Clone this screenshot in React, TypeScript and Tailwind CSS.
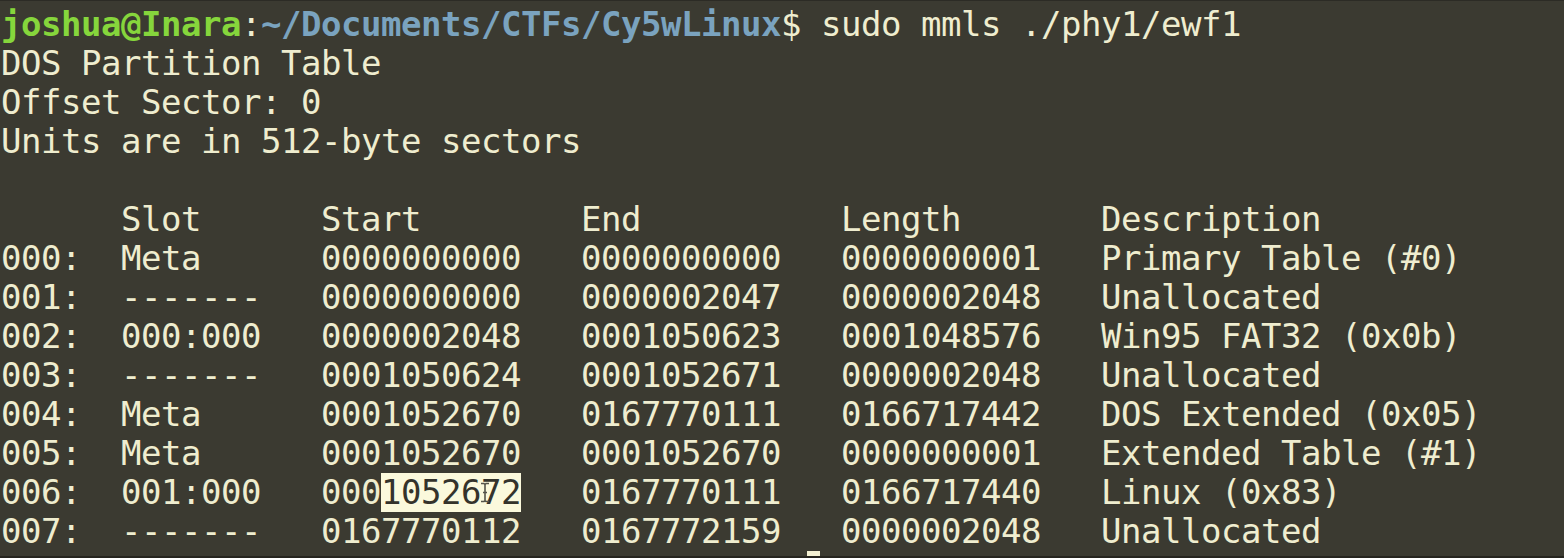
import React from 'react';

// mmls output, columns padded the way the tool prints them
const rows: [string, string, string, string, string, string][] = [
  ['000:', 'Meta', '0000000000', '0000000000', '0000000001', 'Primary Table (#0)'],
  ['001:', '-------', '0000000000', '0000002047', '0000002048', 'Unallocated'],
  ['002:', '000:000', '0000002048', '0001050623', '0001048576', 'Win95 FAT32 (0x0b)'],
  ['003:', '-------', '0001050624', '0001052671', '0000002048', 'Unallocated'],
  ['004:', 'Meta', '0001052670', '0167770111', '0166717442', 'DOS Extended (0x05)'],
  ['005:', 'Meta', '0001052670', '0001052670', '0000000001', 'Extended Table (#1)'],
  ['006:', '001:000', '0001052672', '0167770111', '0166717440', 'Linux (0x83)'],
  ['007:', '-------', '0167770112', '0167772159', '0000002048', 'Unallocated'],
];

const pad = (s: string, n: number) => s + ' '.repeat(Math.max(0, n - s.length));

function Line({ children }: { children?: React.ReactNode }) {
  return <div className="h-[39px] leading-[39px] whitespace-pre">{children}</div>;
}

function IBeam() {
  return (
    <svg className="absolute left-[98px] top-[9px]" width="12" height="21" viewBox="0 0 12 21">
      <path d="M2 1.5h3l1 1 1-1h3M6 2.5v16M2 19.5h3l1-1 1 1h3M4 10.5h4" stroke="#55544a" strokeWidth="1.6" fill="none" />
    </svg>
  );
}

export default function App() {
  return (
    <div className="w-[1564px] h-[558px] overflow-hidden bg-[#3b3a31] text-[#efedcf] text-[34px] tracking-[-0.47px] font-['DejaVu_Sans_Mono',monospace]">
      <div className="h-[5px] border-t border-[#2c2b25]" />
      <div className="pl-[1px]">
        <Line>
          <span className="font-bold text-[#86d63c]">joshua@Inara</span>
          <span>:</span>
          <span className="font-bold text-[#7aa3bf]">~/Documents/CTFs/Cy5wLinux</span>
          <span>$ sudo mmls ./phy1/ewf1</span>
        </Line>
        <Line>DOS Partition Table</Line>
        <Line>Offset Sector: 0</Line>
        <Line>Units are in 512-byte sectors</Line>
        <Line />
        <Line>{'      ' + pad('Slot', 10) + pad('Start', 13) + pad('End', 13) + pad('Length', 13) + 'Description'}</Line>
        {rows.map(([idx, slot, start, end, len, desc]) => (
          <Line key={idx}>
            {pad(idx, 6) + pad(slot, 10)}
            {idx === '006:' ? (
              <>
                {'000'}
                <span className="relative inline-block h-[39px] align-top bg-[#fbf9dc] text-[#34332b]">
                  {'1052672'}
                  <IBeam />
                </span>
                {'   '}
              </>
            ) : (
              pad(start, 13)
            )}
            {pad(end, 13) + pad(len, 13) + desc}
          </Line>
        ))}
      </div>
      <div className="h-[7px] flex flex-col">
        <div className="h-[5px] pl-[807px]">
          <div className="w-[13px] h-[5px] bg-[#f3f0d2]" />
        </div>
        <div className="h-[2px] bg-[#26251f]" />
      </div>
    </div>
  );
}
